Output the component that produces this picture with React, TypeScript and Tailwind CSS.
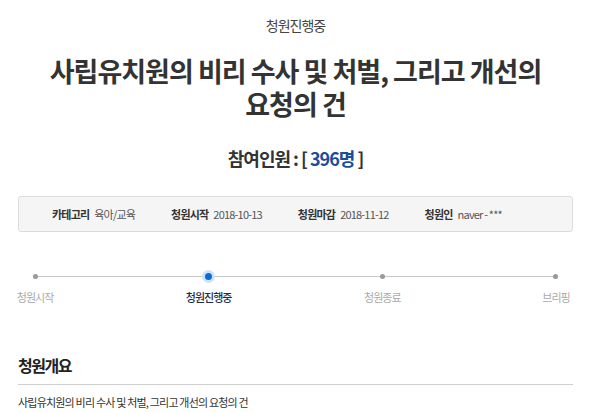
import React from "react";

const steps = [
  { label: "청원시작", active: false },
  { label: "청원진행중", active: true },
  { label: "청원종료", active: false },
  { label: "브리핑", active: false },
];

const info = [
  { k: "카테고리", v: "육아/교육" },
  { k: "청원시작", v: "2018-10-13" },
  { k: "청원마감", v: "2018-11-12" },
  { k: "청원인", v: "naver - ***" },
];

export default function App() {
  return (
    <div className="w-[591px] h-[413px] overflow-hidden bg-white px-[18px] text-[#333] font-['Noto_Sans_CJK_KR',sans-serif]">
      {/* header */}
      <div className="pt-[15px] text-center text-[14px] leading-[20px] tracking-[-1px] text-[#444]">
        청원진행중
      </div>
      <h1 className="mt-[19px] text-center text-[27px] font-bold leading-[33px] tracking-[-1px] text-[#333]">
        사립유치원의 비리 수사 및 처벌, 그리고 개선의
        <br />
        요청의 건
      </h1>
      <div className="mt-[26px] text-center text-[18px] font-bold leading-[24px] tracking-[-1px] text-[#333]">
        참여인원 : [ <span className="text-[#1d4d9a]">396명</span> ]
      </div>

      {/* info box */}
      <div className="mt-[26px] h-[36px] rounded-[3px] border border-[#dcdcdc] bg-[#f5f5f5] flex items-center pl-[33px] gap-[36px] text-[11px] tracking-[-0.8px]">
        {info.map((it) => (
          <div key={it.k} className="flex items-center gap-[5px]">
            <span className="font-bold text-[#333]">{it.k}</span>
            <span className="text-[#555]">{it.v}</span>
          </div>
        ))}
      </div>

      {/* stepper */}
      <div className="relative mt-[40px] flex justify-between">
        <div className="absolute left-[17px] right-[17px] top-[4px] h-px bg-[#c8c8c8]" />
        {steps.map((s) => (
          <div key={s.label} className="relative w-[34px] flex flex-col items-center">
            <div className="h-[9px] flex items-center justify-center">
              {s.active ? (
                <span className="w-[13px] h-[13px] rounded-full bg-[#cfe3f8] flex items-center justify-center">
                  <span className="w-[7px] h-[7px] rounded-full bg-[#0b6cd6]" />
                </span>
              ) : (
                <span className="w-[5px] h-[5px] rounded-full bg-[#999]" />
              )}
            </div>
            <div
              className={
                s.active
                  ? "mt-[9px] whitespace-nowrap text-[11px] leading-[14px] tracking-[-1px] font-medium text-[#1e2c4a]"
                  : "mt-[9px] whitespace-nowrap text-[11px] leading-[14px] tracking-[-1px] text-[#aaa]"
              }
            >
              {s.label}
            </div>
          </div>
        ))}
      </div>

      {/* overview */}
      <div className="mt-[50px] text-[16px] font-bold leading-[22px] tracking-[-1.5px] text-[#222]">
        청원개요
      </div>
      <div className="mt-[8px] h-px bg-[#cfcfcf]" />
      <div className="mt-[9px] text-[11px] leading-[16px] tracking-[-0.8px] text-[#333]">
        사립유치원의 비리 수사 및 처벌, 그리고 개선의 요청의 건
      </div>
    </div>
  );
}
